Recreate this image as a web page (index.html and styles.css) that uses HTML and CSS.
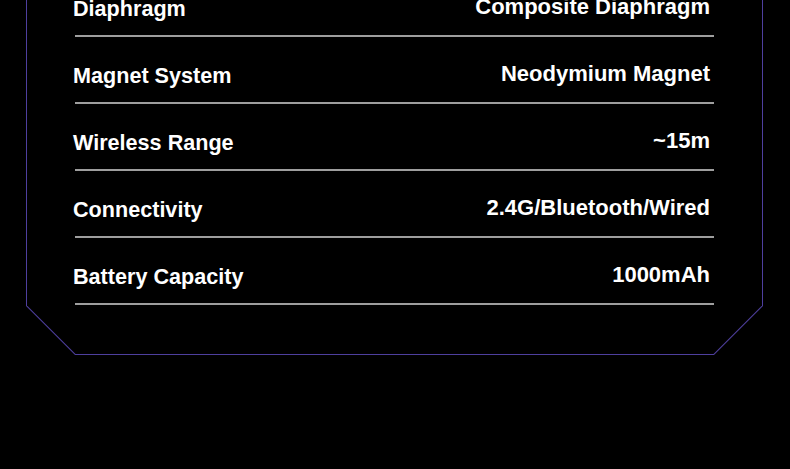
FILE: index.html
```html
<!DOCTYPE html>
<html lang="en">
<head>
<meta charset="utf-8">
<title>Specifications</title>
<link rel="stylesheet" href="styles.css">
</head>
<body>
<div class="page">
  <div class="frame">
    <div class="panel">
      <div class="spec-row"><span class="label">Diaphragm</span><span class="value">Composite Diaphragm</span></div>
      <div class="spec-row"><span class="label">Magnet System</span><span class="value">Neodymium Magnet</span></div>
      <div class="spec-row"><span class="label">Wireless Range</span><span class="value">~15m</span></div>
      <div class="spec-row"><span class="label">Connectivity</span><span class="value">2.4G/Bluetooth/Wired</span></div>
      <div class="spec-row"><span class="label">Battery Capacity</span><span class="value">1000mAh</span></div>
    </div>
  </div>
</div>
</body>
</html>
```
FILE: styles.css
```css
html, body {
  margin: 0;
  padding: 0;
  background: #000;
}
body {
  width: 790px;
  height: 469px;
  overflow: hidden;
  font-family: "Liberation Sans", Arial, sans-serif;
  font-weight: bold;
  color: #fff;
}
.page {
  padding-left: 26px;
  width: 737px;
  margin-top: -40px;
}
.frame {
  background: #4e3f9e;
  padding: 0 1px 1px 1px;
  clip-path: polygon(0 0, 100% 0, 100% calc(100% - 49px), calc(100% - 49px) 100%, 49px 100%, 0 calc(100% - 49px));
}
.panel {
  background: #000;
  padding: 10px 48px 49px 48px;
  clip-path: polygon(0 0, 100% 0, 100% calc(100% - 48.5px), calc(100% - 48.5px) 100%, 48.5px 100%, 0 calc(100% - 48.5px));
}
.spec-row {
  display: flex;
  justify-content: space-between;
  align-items: flex-start;
  height: 65px;
  border-bottom: 2px solid #9e9e9e;
  line-height: 22px;
}
.label {
  font-size: 21.6px;
  margin-left: -2px;
  margin-top: 28px;
}
.value {
  font-size: 22px;
  margin-right: 4px;
  margin-top: 26px;
}
```
